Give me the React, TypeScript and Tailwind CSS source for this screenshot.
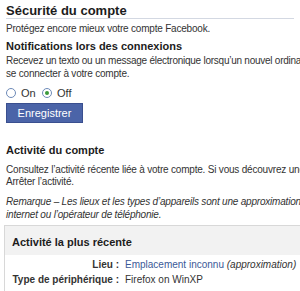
export default function App() {
  return (
    <div className="w-[300px] h-[291px] overflow-hidden bg-white text-[#333] font-['Liberation_Sans',Arial,sans-serif] text-[10px] leading-[12px] whitespace-nowrap">
      <div className="px-[6px] pt-[3px]">
        <h2 className="text-[13px] leading-[15px] font-bold text-[#1c1c1c] border-b border-[#d3d8e2]">
          Sécurité du compte
        </h2>
        <p className="mt-[4px] tracking-[-0.2px]">Protégez encore mieux votre compte Facebook.</p>

        <h3 className="mt-[5px] font-bold text-[11px] leading-[13px] text-[#1c1c1c]">Notifications lors des connexions</h3>
        <p className="mt-[1px] leading-[13px] tracking-[-0.25px]">Recevez un texto ou un message électronique lorsqu’un nouvel ordinateur</p>
        <p className="leading-[13px] tracking-[-0.2px]">se connecter à votre compte.</p>

        <div className="mt-[7px] h-[11px] flex items-center text-[11px]">
          <span className="w-[10px] h-[10px] rounded-full border border-[#6d8ab8] bg-white" />
          <span className="ml-[5px] w-[21px]">On</span>
          <span className="w-[10px] h-[10px] rounded-full border border-[#6d8ab8] bg-white flex items-center justify-center">
            <span className="w-[4px] h-[4px] rounded-full bg-[#3a9a3a]" />
          </span>
          <span className="ml-[5px]">Off</span>
        </div>

        <button className="mt-[5px] w-[77px] h-[20px] bg-[#4b64a8] border border-[#3a4f8f] text-white text-[11px] leading-[18px] text-center">
          Enregistrer
        </button>

        <h3 className="mt-[21px] font-bold text-[11px] leading-[13px] text-[#1c1c1c]">Activité du compte</h3>
        <p className="mt-[7px] tracking-[-0.2px]">Consultez l’activité récente liée à votre compte. Si vous découvrez une</p>
        <p className="tracking-[-0.2px]">Arrêter l’activité.</p>
        <p className="mt-[7px] italic leading-[13px] tracking-[-0.2px]">Remarque – Les lieux et les types d’appareils sont une approximation</p>
        <p className="italic leading-[13px] tracking-[-0.2px]">internet ou l’opérateur de téléphonie.</p>
      </div>

      <div className="mt-[4px] ml-[4px] border border-[#d8d8d8] border-r-0">
        <div className="bg-[#f2f2f2] px-[7px] pt-[10px] pb-[6px] font-bold text-[11px] leading-[13px] text-[#1c1c1c]">
          Activité la plus récente
        </div>
        <div className="grid grid-cols-[114px_1fr] gap-x-[6px] gap-y-[3px] pt-[4px] pb-[10px]">
          <span className="text-right font-bold text-[#333]">Lieu :</span>
          <span>
            <span className="text-[#3b5998]">Emplacement inconnu</span> <span className="italic">(approximation)</span>
          </span>
          <span className="text-right font-bold text-[#333]">Type de périphérique :</span>
          <span>Firefox on WinXP</span>
        </div>
      </div>
    </div>
  );
}
